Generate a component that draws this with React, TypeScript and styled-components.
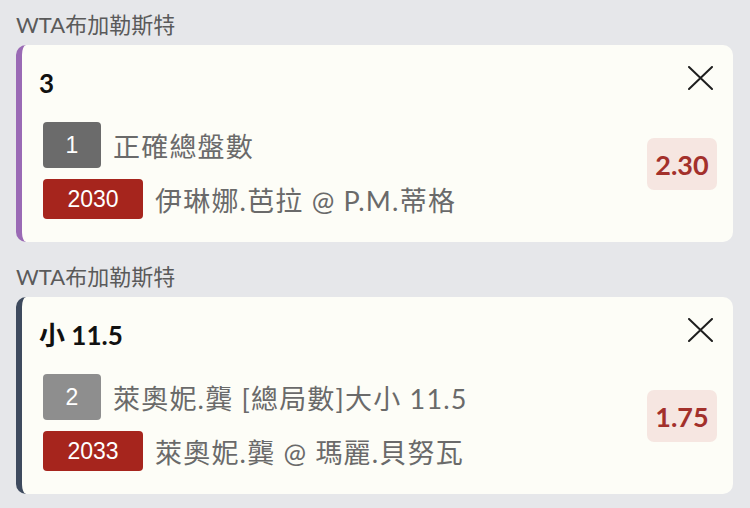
import styled, { createGlobalStyle } from "styled-components";

const GlobalStyle = createGlobalStyle`
  html, body {
    margin: 0;
    background: #e6e7ea;
  }
  body {
    font-family: Lato, "Noto Sans CJK TC", sans-serif;
  }
`;

type Bet = {
   league: string;
   accent: string;
   title: string;
   seq: string;
   seqTone: string;
   market: string;
   code: string;
   match: string;
   odds: string;
};

const bets: Bet[] = [
   {
      league: "WTA布加勒斯特",
      accent: "#9a6ab5",
      title: "3",
      seq: "1",
      seqTone: "#6b6b6b",
      market: "正確總盤數",
      code: "2030",
      match: "伊琳娜.芭拉 @ P.M.蒂格",
      odds: "2.30",
   },
   {
      league: "WTA布加勒斯特",
      accent: "#3e4a5e",
      title: "小 11.5",
      seq: "2",
      seqTone: "#8e8e8e",
      market: "萊奧妮.龔 [總局數]大小 11.5",
      code: "2033",
      match: "萊奧妮.龔 @ 瑪麗.貝努瓦",
      odds: "1.75",
   },
];

const CloseIcon = () => (
   <svg width="25" height="24" viewBox="0 0 25 24" fill="none">
      <path d="M1 1 L24 23 M24 1 L1 23" stroke="#1e1e1e" strokeWidth="2" strokeLinecap="round" />
   </svg>
);

export default function App() {
   return (
      <>
         <GlobalStyle />
         <Page>
            {bets.map((bet, i) => (
               <Section key={i}>
                  <League>{bet.league}</League>
                  <Card $accent={bet.accent}>
                     <Body>
                        <Title>{bet.title}</Title>
                        <Row>
                           <Badge $bg={bet.seqTone} $width={58} $height={46}>
                              {bet.seq}
                           </Badge>
                           <Label>{bet.market}</Label>
                        </Row>
                        <Row>
                           <Badge $bg="#a6251d" $width={100} $height={40}>
                              {bet.code}
                           </Badge>
                           <Label>{bet.match}</Label>
                        </Row>
                     </Body>
                     <Side>
                        <CloseButton aria-label="close">
                           <CloseIcon />
                        </CloseButton>
                        <OddsArea>
                           <Odds>{bet.odds}</Odds>
                        </OddsArea>
                     </Side>
                  </Card>
               </Section>
            ))}
         </Page>
      </>
   );
}

const Page = styled.div`
  display: flex;
  flex-direction: column;
  gap: 10px;
  padding: 0 17px 13px 16px;
`;

const Section = styled.section`
  display: flex;
  flex-direction: column;
`;

const League = styled.div`
  height: 45px;
  display: flex;
  align-items: center;
  font-size: 22px;
  color: #5a5a5a;
`;

const Card = styled.div<{ $accent: string }>`
  display: flex;
  background: #fdfdf7;
  border-left: 6px solid ${(p) => p.$accent};
  border-radius: 10px;
  min-height: 197px;
  box-sizing: border-box;
`;

const Body = styled.div`
  flex: 1;
  display: flex;
  flex-direction: column;
  padding: 22px 0 20px 19px;
`;

const Title = styled.div`
  height: 32px;
  line-height: 32px;
  font-size: 26px;
  font-weight: 700;
  color: #111;
  margin: 0 0 23px -2px;
`;

const Row = styled.div`
  display: flex;
  align-items: center;
  gap: 12px;
  height: 46px;
  padding-left: 2px;
  & + & {
    margin-top: 8px;
  }
`;

const Badge = styled.span<{ $bg: string; $width: number; $height: number }>`
  display: inline-flex;
  align-items: center;
  justify-content: center;
  flex-shrink: 0;
  width: ${(p) => p.$width}px;
  height: ${(p) => p.$height}px;
  border-radius: 4px;
  background: ${(p) => p.$bg};
  color: #fff;
  font-family: "Liberation Sans", Arial, sans-serif;
  font-size: 23px;
`;

const Label = styled.span`
  font-size: 27px;
  letter-spacing: 1.2px;
  color: #6a6a6a;
  white-space: nowrap;
`;

const Side = styled.div`
  display: flex;
  flex-direction: column;
  align-items: flex-end;
  padding: 21px 16px 4px 0;
`;

const CloseButton = styled.button`
  display: flex;
  align-items: center;
  justify-content: center;
  border: none;
  background: none;
  padding: 0 4px 0 0;
  margin: 0;
  height: 24px;
  cursor: pointer;
`;

const OddsArea = styled.div`
  flex: 1;
  display: flex;
  align-items: center;
`;

const Odds = styled.div`
  width: 70px;
  height: 52px;
  display: flex;
  align-items: center;
  justify-content: center;
  border-radius: 7px;
  background: #f6e6e1;
  color: #a3302b;
  font-size: 27px;
  font-weight: 700;
`;
